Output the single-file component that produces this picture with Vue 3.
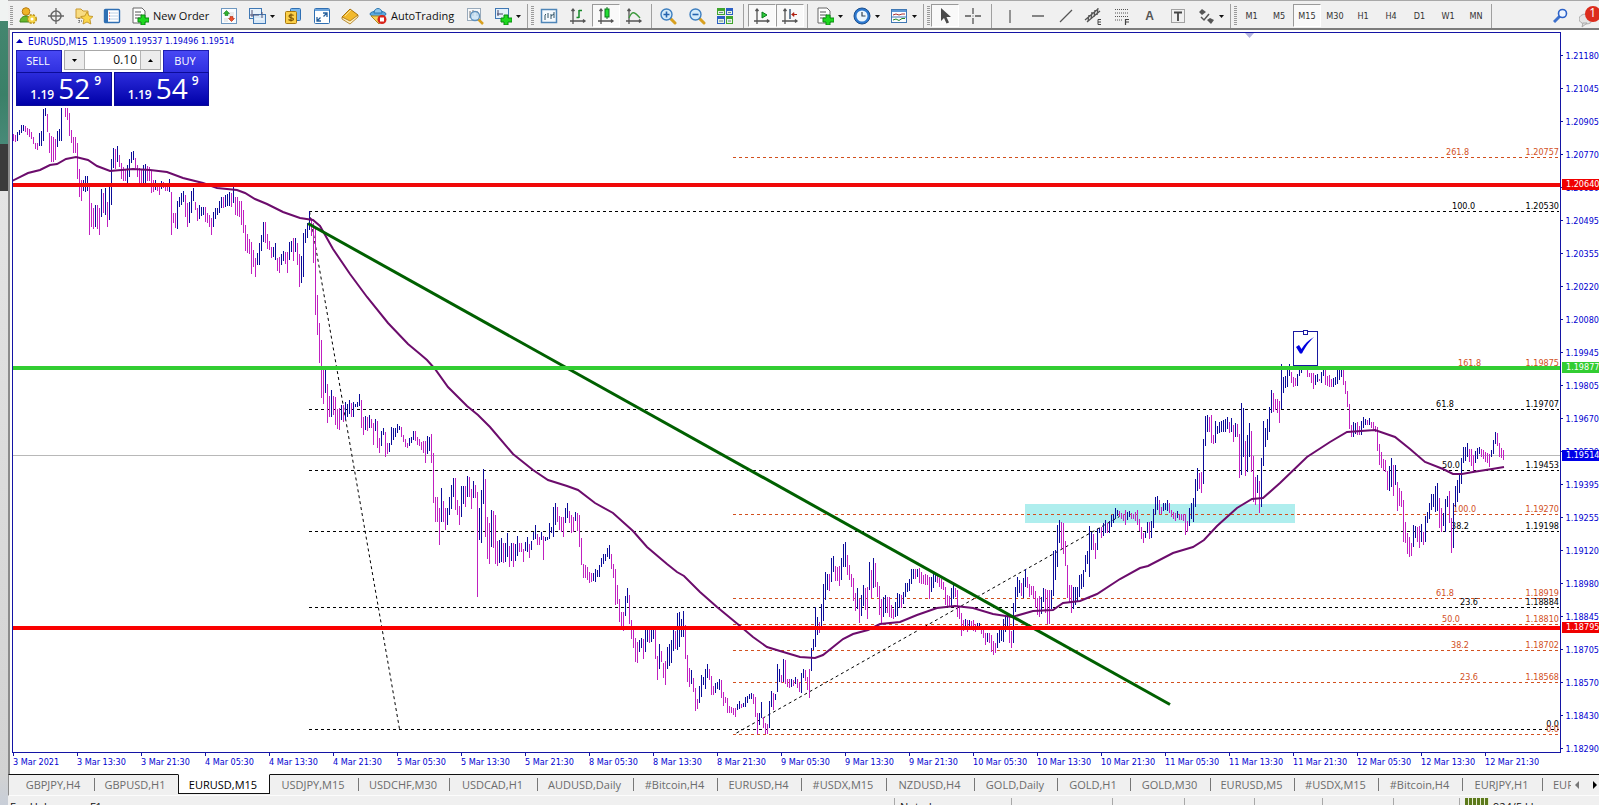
<script setup>
import { ref } from 'vue'

const lots = ref('0.10')

const caret = '<path d="M0 0h5L2.500 3z" fill="#111"/>'
const doc = '<path d="M2 1h9l3 3v12H2z" fill="#fff" stroke="#666"/><path d="M4 5h6M4 8h7M4 11h5" stroke="#555"/>'
const plus = '<path d="M10 8h4v3h4v4h-4v3h-4v-3H7v-4h3z" fill="#1fd81f" stroke="#0a8a12"/>'
const axes = '<path d="M4 2v15M1 14h15M2.500 4L4 2l1.500 2M14 12.500l2 1.500-2 1.500" fill="none" stroke="#555" stroke-width="1.300"/>'
const lens = '<path d="M11 11l5 5" stroke="#d8a020" stroke-width="3" stroke-linecap="round"/><circle cx="7.500" cy="7.500" r="5.500" fill="#d3ebfa" stroke="#3d7fc0" stroke-width="1.400"/>'

const icons = {
  user: '<circle cx="7" cy="4.500" r="3.800" fill="#f0b428" stroke="#b87a10"/><path d="M1 15c0-8 12-8 12 0z" fill="#67b82e" stroke="#3d8418"/><circle cx="13" cy="12" r="4" fill="#f6d548" stroke="#b8901c" stroke-dasharray="2 1.200" stroke-width="2"/><circle cx="13" cy="12" r="3.600" fill="#f6d548"/><circle cx="13" cy="12" r="1.500" fill="#fff"/>',
  target: '<circle cx="9" cy="9" r="5" fill="none" stroke="#666" stroke-width="1.500"/><path d="M9 1v16M1 9h16" stroke="#666" stroke-width="1.300"/>',
  folder: '<path d="M1 2h5l2 2h5v7H1z" fill="#f8dc82" stroke="#c99a30"/><path d="M4 11v6M4 14h4" stroke="#444" stroke-dasharray="1 1"/><path d="M12 5l2 4 4 .5-3 3 .8 4.500L12 15l-4 2 .8-4.500-3-3 4-.5z" fill="#fbd64a" stroke="#b98a1c" stroke-width=".8"/>',
  nav: '<rect x="1.500" y="2.500" width="15" height="13" rx="1" fill="#fff" stroke="#2f6fb3" stroke-width="1.400"/><path d="M2 3h3v12H2z" fill="#2f6fb3"/><path d="M7 6h8M7 9h8M7 12h8" stroke="#bcd2e8"/><path d="M6 6h1M6 9h1M6 12h1" stroke="#d33"/>',
  order: doc + plus,
  trades: '<rect x="1.500" y="1.500" width="15" height="15" fill="#fafcfe" stroke="#6f98c0"/><path d="M9 6h5M9 8h5M4 12h4M4 14h4" stroke="#d8d8d8"/><path d="M6.500 3.500l3 3H8v2H5v-2H3.500z" fill="#30b030" stroke="#178017" stroke-width=".6"/><path d="M11.500 14.500l-3-3H10v-2h3v2h1.500z" fill="#f0502c" stroke="#a82c10" stroke-width=".6"/>',
  windows: '<rect x="1.500" y="1.500" width="12" height="10" fill="#e9f2fb" stroke="#4078b4"/><rect x="5.500" y="7.500" width="12" height="9" fill="#d8e8f7" stroke="#4078b4"/><path d="M4 3v7M2 8h9M14 5v6" stroke="#557"/><path d="M7 12h9" stroke="#fff"/>',
  money: '<rect x="6.500" y="1.500" width="10" height="12" rx="1" fill="#7db8ec" stroke="#2f6fb3"/><rect x="1.500" y="4.500" width="11" height="12" rx="1" fill="#fbd04a" stroke="#a8780e"/><path d="M9.500 8.500C8.500 7.500 5 7.500 5 9.300s4.500 1 4.500 2.700-3.500 2-5 .5M7 6.500v8" fill="none" stroke="#7a5200" stroke-width="1.100"/>',
  full: '<rect x="1.500" y="1.500" width="15" height="15" rx="1" fill="#fff" stroke="#2f6fb3"/><path d="M2 2h14v2H2z" fill="#6ca4dc"/><path d="M4 10v4h4M4 14l3.500-3.500M10 6h4v4M14 6l-3.500 3.500" fill="none" stroke="#27609c" stroke-width="1.300"/>',
  book: '<path d="M1 10L9 2l8 6-8 8z" fill="#f2b92c" stroke="#a8720c"/><path d="M1 10l8 4 8-6v2l-8 7-8-5z" fill="#fff0c0" stroke="#a8720c" stroke-width=".8"/><path d="M4 9l6-6" stroke="#fbe08c"/>',
  auto: '<ellipse cx="9" cy="7" rx="8" ry="3" fill="#5ba8de" stroke="#2c76b0"/><path d="M5 6c0-6 8-6 8 0z" fill="#8fc8ee" stroke="#2c76b0"/><path d="M2 9h13l-5 8z" fill="#f8d25a" stroke="#b08820"/><circle cx="13" cy="12.500" r="4.500" fill="#d8241c"/><rect x="11" y="10.500" width="4" height="4" fill="#fff"/>',
  tester: '<rect x="1.500" y="1.500" width="13" height="12" fill="#f7f9fb" stroke="#9ab"/><path d="M4 4v7M7 3v6M11 4v5" stroke="#777"/><path d="M12 12l5 5" stroke="#d8a020" stroke-width="2.500"/><circle cx="9" cy="9" r="4.500" fill="#c7e2f6" fill-opacity=".8" stroke="#5d8fbc" stroke-width="1.300"/>',
  newchart: '<rect x="1.500" y="1.500" width="13" height="10" fill="#e4f0fb" stroke="#4078b4"/><path d="M4 3v6M3 7h6" stroke="#446"/>' + plus,
  bars: '<rect x="1.500" y="2.500" width="15" height="13" fill="#f4f9fd" stroke="#4f86b8" stroke-width="1.500"/><path d="M5 13V8M5 8l1-1M8 11V6M11 12V7M11 9l3-2M14 11V5" stroke="#356" fill="none"/>',
  ohlc: axes + '<path d="M10 3v8M10 3.500h3M7.500 10.500H10" stroke="#168a28" stroke-width="1.500"/>',
  candle: axes + '<path d="M10 0v12" stroke="#0b7a1c"/><rect x="8" y="2" width="4" height="8" fill="#22dd33" stroke="#0b7a1c"/>',
  line: axes + '<path d="M4 11c3-8 6-6 11 0" fill="none" stroke="#3d9a3d" stroke-width="1.300"/>',
  zoomin: lens + '<path d="M7.500 4.500v6M4.500 7.500h6" stroke="#2464b0" stroke-width="1.600"/>',
  zoomout: lens + '<path d="M4.500 7.500h6" stroke="#2464b0" stroke-width="1.600"/>',
  tile: '<path d="M1 1h8v7H1zM10 9h7v8h-7z" fill="#3fa52e"/><path d="M10 1h7v7h-7zM1 9h8v8H1z" fill="#2b5fc4"/><path d="M2 4h6v3H2zM11 4h5v3h-5zM2 12h6v4H2zM11 12h5v4h-5z" fill="#e6f2e2"/><path d="M3 5.500h4M12 5.500h3M3 14h4M12 14h3" stroke="#688"/>',
  scroll: axes + '<path d="M9 5v6l5-3z" fill="#2ccc3a" stroke="#0b7a1c"/>',
  shift: axes + '<path d="M9 2v10" stroke="#246" stroke-width="1.300"/><path d="M10.500 7.500l2.500-2v4z" fill="#b02010" stroke="#b02010" stroke-width=".6"/><path d="M13 7.500h3" stroke="#b02010"/>',
  indic: doc + plus,
  clock: '<circle cx="9" cy="9" r="8" fill="#2c78d0" stroke="#1c508e"/><circle cx="9" cy="9" r="5.500" fill="#eaf5fd"/><path d="M9 5v4h3.500" fill="none" stroke="#345" stroke-width="1.200"/>',
  tmpl: '<rect x="1.500" y="2.500" width="15" height="13" fill="#fbfdff" stroke="#4078b4"/><path d="M2 3h14v2H2z" fill="#5d99d8"/><path d="M2 10h14" stroke="#4078b4"/><path d="M3 8l3-1 3 1 3-1h3" fill="none" stroke="#a33"/><path d="M3 13l3-1 3 1.500 3-2h3" fill="none" stroke="#282"/>',
  cursor: '<path d="M5 1v13l3-3 2.500 5.500 2.500-1L10.500 10H15z" fill="#4a4a4a"/>',
  cross: '<path d="M9 1v6M9 11v6M1 9h6M11 9h6" stroke="#555" stroke-width="1.300"/><path d="M8.500 8.500h1v1h-1z" fill="#555"/>',
  vline: '<path d="M9 3v13" stroke="#555" stroke-width="1.200"/>',
  hline: '<path d="M3 9h12" stroke="#555" stroke-width="1.400"/>',
  diag: '<path d="M3 15L15 3" stroke="#555" stroke-width="1.300"/>',
  equi: '<path d="M1 13L14 2M3 15L16 4M5 8l-1 6M8 5l-1 7M11 3l-1 7M14 1l-1 7" stroke="#555" stroke-width="1.300"/><path d="M17 12.500h-3v5h3M14 15h3" fill="none" stroke="#444"/>',
  fibo: '<path d="M2 2.500h14M2 6h14M2 9.500h14M2 13h8" stroke="#555" stroke-dasharray="1 1"/><path d="M16 12.500h-3.500V18M12.500 15H16" fill="none" stroke="#444" stroke-width="1.200"/>',
  box: '<rect x="2.500" y="2.500" width="13" height="13" fill="none" stroke="#555" stroke-dasharray="1 1"/><path d="M5 5.500h8M9 5v9" stroke="#444" stroke-width="1.800"/>',
  shapes: '<path d="M2 5l3-3 4 3-4 3zM10 13l3-2 4 2-3 4z" fill="#555"/><path d="M4 10l3 3 5-6" fill="none" stroke="#555" stroke-width="1.500"/>',
}

const groups = [
  [
    { w: 28, i: 'user', t: 'New chart profile' }, { w: 28, i: 'target', t: 'Data window' }, { w: 28, i: 'folder', t: 'Navigator' }, { w: 28, i: 'nav', t: 'Terminal' },
    { w: 89, i: 'order', label: 'New Order' }, { w: 28, i: 'trades', t: 'Trades' }, { w: 36, i: 'windows', t: 'Profiles', caret: 1 }, { w: 28, i: 'money', t: 'Market watch' },
    { w: 29, i: 'full', t: 'Full screen' }, { w: 28, i: 'book', t: 'MetaEditor' }, { w: 97, i: 'auto', label: 'AutoTrading' }, { w: 28, i: 'tester', t: 'Strategy tester' },
    { w: 36, i: 'newchart', t: 'New chart', caret: 1 }, { sep: 4 },
  ],
  [
    { w: 28, i: 'bars', t: 'Charts' }, { w: 29, i: 'ohlc', t: 'Bar chart' }, { w: 28, i: 'candle', t: 'Candlesticks', on: 1 }, { w: 28, i: 'line', t: 'Line chart' }, { sep: 6 },
    { w: 28, i: 'zoomin', t: 'Zoom in' }, { w: 29, i: 'zoomout', t: 'Zoom out' }, { w: 28, i: 'tile', t: 'Tile windows' }, { sep: 9 },
    { w: 28, i: 'scroll', t: 'Auto scroll', on: 1 }, { w: 28, i: 'shift', t: 'Chart shift', on: 1 }, { sep: 7 },
    { w: 37, i: 'indic', t: 'Indicators', caret: 1 }, { w: 37, i: 'clock', t: 'Periods', caret: 1 }, { w: 37, i: 'tmpl', t: 'Templates', caret: 1 }, { sep: 3 },
  ],
  [
    { w: 28, i: 'cursor', t: 'Cursor', on: 1 }, { w: 28, i: 'cross', t: 'Crosshair' }, { sep: 8 }, { w: 29, i: 'vline', t: 'Vertical line' }, { w: 28, i: 'hline', t: 'Horizontal line' },
    { w: 27, i: 'diag', t: 'Trendline' }, { w: 28, i: 'equi', t: 'Channel' }, { w: 29, i: 'fibo', t: 'Fibonacci' }, { w: 27, tf: 'A', bold: 1 }, { w: 29, i: 'box', t: 'Text label' },
    { w: 36, i: 'shapes', t: 'Arrows', caret: 1 }, { sep: 4 },
  ],
  [
    { w: 27, tf: 'M1' }, { w: 28, tf: 'M5' }, { w: 28, tf: 'M15', on: 1 }, { w: 28, tf: 'M30' }, { w: 28, tf: 'H1' }, { w: 28, tf: 'H4' }, { w: 29, tf: 'D1' }, { w: 28, tf: 'W1' }, { w: 28, tf: 'MN' }, { sep: 3 },
  ],
]

// Price bars: high/low pairs in thirds of a pixel, one bar every two pixels.
const runs = [
  { x: 13, y: 100, d: '102 122 105 126 95 124 90 105 76 100 75 92 78 96 85 104 88 110 95 118 110 132 128 148 130 150 100 138 93 138 27 124 24 48 42 96 98 160 108 185 110 186 118 180 93 140 88 122 24 122 24 24 24 50 24 60 38 108 90 130 112 158 112 160 130 238 208 290 240 303 240 272 228 275 228 272 250 406 310 380 324 386 314 380 315 386 324 406 268 350 280 338 265 345 305 382 248 360 178 314 144 204 148 206 138 186 165 200 190 238 202 242 208 242 195 248 178 230 156 190 154 180 175 205 195 232 205 248 210 250 194 248 193 250 197 242 200 244 212 278 240 275 240 270 250 272 262 284 243 268 246 265 250 272 250 274 238 276 275 404 338 368 340 384 303 386 290 320 280 315 273 305 284 352 310 382 306 370 272 340 264 302 305 330 325 362 315 358 322 348 322 345 322 365 338 370 345 382 354 404 337 380 325 358 324 345 303 340 290 325 292 325 284 322 283 318 275 318 278 322 262 310 290 345 292 348 302 350 303 375 330 400 376 452 402 458 418 462 425 523 450 500 474 530 460 495 430 494 405 452 366 425 366 428 402 446 422 450 440 474 440 472 430 480 475 512 470 520 462 494 453 482 455 492 455 518 425 480 422 455 414 482 415 455 428 495 462 560 468 550 400 530 388 430 370 415 334 390 355 408 370 490 380 645 585 706 670 790 720 895 808 912 806 878 853 968 888 950 870 950 888 945 890 975 928 988 925 990 916 960 916 966 906 960 912 950 900 942 908 952 905 952 912 920 906 922 882 918' },
  { x: 361, y: 360, d: '120 205 170 225 168 210 172 214 165 205 178 205 190 255 178 212 182 265 235 278 214 258 205 225 215 290 250 282 248 276 200 255 203 240 204 230 192 218 198 210 202 230 225 245 238 262 248 264 234 258 232 248 212 240 212 244 230 255 238 258 245 270 244 280 244 308 228 282 230 272 222 308 278 430 410 486 412 486 443 556 385 486 424 486 443 510 443 496 412 464 375 446 354 410 355 450 420 465 438 496 378 470 378 432 378 440 348 410 350 412 386 446 362 415 375 415 396 710 445 540 390 550 328 432 358 530 472 598 488 612 450 560 454 565 465 612 542 618 540 610 534 606 550 610 548 606 518 590 558 622 548 602 548 622 552 602 528 588 550 576 548 576 568 606 545 572 532 575 552 595 542 570 515 540 495 538 522 555 530 555 516 540 528 600 530 542 532 540 490 538 500 518 442 530 430 496 440 486 468 510 472 516 470 530 445 490 428 474 452 490 466 518 472 515 456 484 458 512 465 562 533 615 612 654 615 655 622 660 635 670 640 665 640 664 628 665 630 652 615 650 594 622 582 612 582 602 565 592 556 596 582 626 612 655 628 736 675 732 718 786 755 800 755 812 708 768 685 728 705 792 780 838 808 865 835 905 846 910 840 876 834 865 836 898 808 875 808 846 810 850 810 845 806 838 810 898 888 960 852 928 872 905 910 955 902 974 860 926 852 918 840 908 808 872 812 866 758 870 755 860 778 830 752 830 795 896 884 965 925 982 930 972 955 995 985 1052 1018 1048 978 1028' },
  { x: 701, y: 480, d: '585 650 590 615 568 628 552 595 568 600 588 645 618 645 608 640 605 628 598 630 600 655 636 678 650 670 655 698 678 698 680 698 685 705 685 710 672 690 664 688 672 685 668 682 650 680 648 670 642 658 640 658 643 672 650 710 700 763 698 735 665 715 710 745 730 763 732 762 662 745 632 680 638 690 642 660 552 635 568 605 585 610 538 606 540 612 596 622 598 624 596 620 600 618 592 612 598 625 608 635 578 638 568 595 570 602 590 630 568 653 505 574 478 510 382 502 410 465 425 460 372 438 312 422 276 360 282 330 282 332 234 306 228 275 258 302 260 302 258 318 234 300 192 262 186 260 225 285 255 300 282 322 295 362 338 392 325 388 358 428 345 408 315 378 325 390 322 418 246 330 270 355 234 325 250 322 306 350 318 405 358 432 350 410 346 398 352 400 352 412 374 415 388 418 365 412 340 408 342 385 345 385 335 372 310 350 310 336 298 332 268 312 266 298 268 298 266 292 264 310 275 312 285 312 282 315 286 316 290 358 292 335 282 325 285 305 285 308 295 320 298 326 305 330 322 376 345 378 348 382 325 382 312 356 325 350 330 412 380 418 400 468 420 452 418 442 420 455 420 448 422 450 420 452 432 455 430 448 428 445 440 462 448 475 458 495 460 485 458 490 465 515 482 524 488 520 460 505 448 490 444 482 418 485 412 455 405 438 408 488 452 503 370 488 320 395 290 350 300 340 308 348 295 355 268 320 292 325 312 350 318 346 318 358 332 385 355 405 348 412 350 402 325 365 328 400 330 432 330 432 330 388 213 348 210 300 135 262 120 190 125 208 130 222 182 258 255 355' },
  { x: 1069, y: 320, d: '795 850 795 880 800 866 802 855 800 845 765 830 762 808 750 800 705 755 692 732 618 770 635 690 642 690 668 716 628 690 625 640 622 655 610 648 600 640 608 640 602 638 584 622 582 608 564 598 570 588 572 592 578 598 582 602 570 614 575 600 574 592 578 596 582 598 575 602 570 615 598 632 620 658 640 668 635 655 605 640 606 656 604 655 568 625 530 585 528 570 540 582 562 582 548 572 550 570 540 572 550 580 570 592 575 598 578 602 572 595 582 600 582 600 582 602 582 645 604 635 564 618 550 598 535 605 478 560 445 512 458 508 456 518 358 492 288 378 285 335 290 335 285 368 345 372 303 368 318 342 305 338 304 336 300 335 296 336 292 326 305 340 294 336 315 366 310 352 312 352 342 474 250 465 265 410 362 468 345 455 310 412 333 455 408 545 472 555 465 520 484 578 415 560 303 438 325 380 298 360 262 335 210 278 218 275 238 270 236 280 244 310 132 268 172 220 168 205 148 200 132 168 155 190 172 200 175 198 162 198 148 168 132 158' },
  { x: 1303, y: 320, d: '132 148 132 150 148 170 158 172 158 190 160 206 166 196 162 185 176 184 155 190 148 168 150 195 168 198 165 200 178 200 175 202 172 195 150 192 148 180 148 170 148 195 182 222 212 262 252 328 315 350 305 350 308 342 305 346 318 346 303 345 292 325 298 316 300 314 295 315 305 325 305 328 318 336 322 392 372 435 395 445 418 452 420 455 452 510 438 514 415 500 435 528 435 495 486 574 505 558 512 560 540 665 605 668 638 702 652 710 668 708 615 682 618 655 620 665 618 684 612 665 635 675 588 665 575 610 550 598 522 570 522 560 498 575 488 572 535 625 565 635 580 618 536 635 528 560 512 608 595 698 550 684 498 560 480 545 460 518 415 492 380 428 380 422 370 410 388 425 388 438 405 460 392 430 384 418 380 402 388 412 390 418 396 425 400 430 402 440 390 412 360 402 336 372 340 378 368 412 385 415 390 420' },
]

let upPath = ''
let downPath = ''
let prevMid = 0
for (const run of runs) {
  const v = run.d.split(' ').map(Number)
  for (let k = 0; k < v.length; k += 2) {
    const hi = run.y + Math.round(v[k] / 3)
    const lo = run.y + Math.round(v[k + 1] / 3)
    const mid = (hi + lo) / 2
    const seg = `M${run.x + k}.5 ${hi}V${lo}`
    if (mid < prevMid) upPath += seg
    else downPath += seg
    prevMid = mid
  }
}

const average = '12,181 28,173 40,170 50,165 57,164 66,159 76,157 88,160 97,166 110,171 133,169 150,170 167,172 183,178 203,183 217,188 237,190 245,193 255,199 267,204 283,212 300,218 313,220 320,226 333,249 350,274 367,297 388,323 408,344 420,354 427,360 435,369 448,387 467,406 478,415 490,427 513,454 533,470 548,480 567,486 578,490 595,503 613,513 633,531 647,547 667,564 677,572 684,576 700,592 717,607 740,626 753,637 767,647 780,651 800,657 815,658 823,655 843,639 853,634 868,630 880,624 900,622 917,615 937,608 955,606 973,608 993,614 1012,617 1033,611 1053,610 1063,603 1080,601 1097,594 1120,579 1140,568 1148,566 1173,553 1193,547 1204,540 1217,526 1237,508 1252,499 1263,498 1280,483 1307,457 1330,442 1347,432 1375,430 1395,437 1410,449 1425,462 1443,469 1453,474 1462,474 1473,472 1492,469 1504,467'

const black = '#000000'
const orange = '#d2501e'
const fibs = [
  { y: 211, c: black, x: 1452, r: '100.0', p: '1.20530' },
  { y: 409, c: black, x: 1436, r: '61.8', p: '1.19707' },
  { y: 470, c: black, x: 1442, r: '50.0', p: '1.19453' },
  { y: 531, c: black, x: 1451, r: '38.2', p: '1.19198' },
  { y: 607, c: black, x: 1460, r: '23.6', p: '1.18884' },
  { y: 729, c: black, x: 1546, r: '', p: '0.0' },
  { y: 157, c: orange, x: 1446, r: '261.8', p: '1.20757' },
  { y: 368, c: orange, x: 1458, r: '161.8', p: '1.19875' },
  { y: 514, c: orange, x: 1453, r: '100.0', p: '1.19270' },
  { y: 598, c: orange, x: 1436, r: '61.8', p: '1.18919' },
  { y: 624, c: orange, x: 1442, r: '50.0', p: '1.18810' },
  { y: 650, c: orange, x: 1451, r: '38.2', p: '1.18702' },
  { y: 682, c: orange, x: 1460, r: '23.6', p: '1.18568' },
  { y: 734, c: orange, x: 1546, r: '', p: '0.0' },
]
const fibStart = (f) => (f.c === black ? 309 : 733)

const prices = ['1.21180', '1.21045', '1.20905', '1.20770', '1.20630', '1.20495', '1.20355', '1.20220', '1.20080', '1.19945', '1.19805', '1.19670', '1.19530', '1.19395', '1.19255', '1.19120', '1.18980', '1.18845', '1.18705', '1.18570', '1.18430', '1.18290']
const times = ['3 Mar 2021', '3 Mar 13:30', '3 Mar 21:30', '4 Mar 05:30', '4 Mar 13:30', '4 Mar 21:30', '5 Mar 05:30', '5 Mar 13:30', '5 Mar 21:30', '8 Mar 05:30', '8 Mar 13:30', '8 Mar 21:30', '9 Mar 05:30', '9 Mar 13:30', '9 Mar 21:30', '10 Mar 05:30', '10 Mar 13:30', '10 Mar 21:30', '11 Mar 05:30', '11 Mar 13:30', '11 Mar 21:30', '12 Mar 05:30', '12 Mar 13:30', '12 Mar 21:30']

const tabs = [
  ['GBPJPY,H4', 81], ['GBPUSD,H1', 83], ['EURUSD,M15', 92], ['USDJPY,M15', 89], ['USDCHF,M30', 91], ['USDCAD,H1', 88], ['AUDUSD,Daily', 96], ['#Bitcoin,H4', 84], ['EURUSD,H4', 84], ['#USDX,M15', 85], ['NZDUSD,H4', 88], ['GOLD,Daily', 83], ['GOLD,H1', 73], ['GOLD,M30', 80], ['EURUSD,M5', 84], ['#USDX,M15', 84], ['#Bitcoin,H4', 84], ['EURJPY,H1', 80], ['EUR', 28],
]
const statusCells = [117, 101, 72, 70, 68, 71, 66]
</script>

<template>
  <div class="desktop">
    <div class="backdrop"><i class="b1"></i><i class="b2"></i><i class="b3"></i><i class="b4"></i></div>
    <main class="terminal">
      <header class="toolbar">
        <div v-for="(g, gi) in groups" :key="gi" class="group">
          <span class="grip"></span>
          <template v-for="(b, bi) in g" :key="bi">
            <span v-if="b.sep" class="sep" :style="{ width: b.sep + 'px' }"></span>
            <button v-else type="button" class="tool" :class="{ on: b.on, wide: b.label || b.caret, tf: b.tf, bold: b.bold }" :style="{ width: b.w + 'px' }" :aria-label="b.t">
              <svg v-if="b.i" width="18" height="18" viewBox="0 0 18 18" v-html="icons[b.i]"></svg>
              <span v-if="b.label" class="label">{{ b.label }}</span>
              <span v-if="b.tf">{{ b.tf }}</span>
              <svg v-if="b.caret" class="caret" width="5" height="3" v-html="caret"></svg>
            </button>
          </template>
        </div>
        <div class="right">
          <button type="button" class="tool find" aria-label="Search">
            <svg width="16" height="16" viewBox="0 0 16 16"><path d="M1 14l6-6" stroke="#3d70cc" stroke-width="3" /><circle cx="9.500" cy="5.500" r="4" fill="#eef5ff" stroke="#2c62c8" stroke-width="1.600" /></svg>
          </button>
          <button type="button" class="tool alert" aria-label="Notifications">
            <svg width="20" height="24" viewBox="0 0 20 24"><ellipse cx="7" cy="15" rx="7" ry="5" fill="#e4e4e4" stroke="#aaa" /><path d="M4 19l-1 4 5-4z" fill="#e4e4e4" stroke="#aaa" /><circle cx="14" cy="10" r="8" fill="#dc2c1c" /></svg>
            <b>1</b>
          </button>
        </div>
      </header>

      <section class="chart">
        <div class="plot">
          <svg class="canvas">
            <g transform="translate(-13 -33)">
              <rect x="1025" y="504" width="270" height="19" fill="#afeeee" />
              <path d="M13 455.500H3000" stroke="#b8b8b8" />
              <g stroke-dasharray="3 3">
                <path v-for="f in fibs" :key="f.c + f.y" :d="`M${fibStart(f)} ${f.y}.5H1559`" :stroke="f.c" />
              </g>
              <g class="fib">
                <template v-for="f in fibs" :key="f.c + f.y">
                  <text :x="f.x" :y="f.y - 2" :fill="f.c">{{ f.r }}</text>
                  <text x="1559" :y="f.y - 2" :fill="f.c" text-anchor="end">{{ f.p }}</text>
                </template>
              </g>
              <path d="M309.500 211.500L399.500 729M736.500 733L1119.500 516.500" stroke="#000" stroke-dasharray="3 3" fill="none" />
              <g fill="none">
                <path :d="downPath" stroke="#c020c0" />
                <path :d="upPath" stroke="#0c0c98" />
              </g>
              <polyline :points="average" fill="none" stroke="#6c0c6c" stroke-width="2" />
              <path d="M308 223.500L1170 704.500" stroke="#006000" stroke-width="3" />
              <path d="M12 185H3000" stroke="#f00808" stroke-width="4" />
              <path d="M12 368H3000" stroke="#32cd32" stroke-width="4" />
              <path d="M12 628H3000" stroke="#fa0000" stroke-width="4" />
              <g fill="#fff" stroke="#1818a0">
                <rect x="1293.500" y="331.500" width="24" height="34" />
                <rect x="1303.500" y="330.500" width="4" height="4" />
              </g>
              <path d="M1296 347l3-2 2.500 4c3-5 7-9 12.500-12-5 5-8 9-12 16.500h-2z" fill="#0000e0" />
              <path d="M1245 33h9l-4.500 5z" fill="#b4b4e0" />
            </g>
          </svg>
          <div class="caption">
            <svg width="7" height="4"><path d="M0 4L3.500 0 7 4z" fill="#0000b4" /></svg>
            <span class="sym">EURUSD,M15</span>
            <span>1.19509 1.19537 1.19496 1.19514</span>
          </div>
          <div class="ticket">
            <div class="head">
              <button type="button" class="side">SELL</button>
              <div class="spin">
                <button type="button" aria-label="Decrease volume"><svg width="5" height="3"><path d="M0 0h5L2.500 3z" /></svg></button>
                <input v-model="lots" type="text" aria-label="Volume" />
                <button type="button" aria-label="Increase volume"><svg width="5" height="3"><path d="M0 3h5L2.500 0z" /></svg></button>
              </div>
              <button type="button" class="side">BUY</button>
            </div>
            <div class="quotes">
              <button type="button" class="quote"><span>1.19</span><strong>52</strong><sup>9</sup></button>
              <button type="button" class="quote"><span>1.19</span><strong>54</strong><sup>9</sup></button>
            </div>
          </div>
        </div>
        <div class="prices">
          <span v-for="p in prices" :key="p">{{ p }}</span>
          <b class="tag t1">1.20640</b>
          <b class="tag t2">1.19877</b>
          <b class="tag t3">1.19514</b>
          <b class="tag t4">1.18795</b>
        </div>
        <div class="times"><span v-for="t in times" :key="t">{{ t }}</span></div>
      </section>

      <nav class="tabs" aria-label="Charts">
        <button v-for="(t, i) in tabs" :key="i" type="button" :class="{ active: i === 2, bare: i === 1 || i === 18 }" :style="{ width: t[1] + 'px' }">{{ t[0] }}</button>
        <span class="arrows">
          <svg width="4" height="8"><path d="M4 0v8L0 4z" fill="#777" /></svg>
          <svg width="4" height="8"><path d="M0 0v8l4-4z" fill="#000" /></svg>
        </span>
      </nav>

      <footer class="status">
        <span class="help">For Help, press F1</span>
        <span v-for="(w, i) in statusCells" :key="i" class="cell" :style="{ width: w + 'px' }">{{ i === 0 ? 'Noted' : '' }}</span>
        <span class="traffic"><i></i>924/5 kb</span>
      </footer>
    </main>
  </div>
</template>

<style>
body {
  margin: 0;
  overflow: hidden;
}
</style>

<style scoped>
.desktop {
  display: flex;
  height: 100vh;
  overflow: hidden;
  background: #f0f0f0;
  font-family: "Open Sans", "Noto Sans", sans-serif;
  font-size: 11px;
  color: #111;
}
button, input {
  font: inherit;
  color: inherit;
  margin: 0;
  padding: 0;
  border: 0;
  background: none;
  box-sizing: border-box;
}
.backdrop { display: flex; flex-direction: column; flex: 0 0 8px; }
.b1 { height: 21px; background: #f0f3f2; }
.b2 { height: 123px; background: linear-gradient(#44866f, #3a8068 60%, #488a78); }
.b3 { height: 47px; background: #3b3b3b; }
.b4 { flex: 1; background: linear-gradient(#e4e4e4, #d2d2d2 95%, #c8ced8); }
.terminal { flex: 1; min-width: 0; display: flex; flex-direction: column; }

.toolbar {
  display: flex;
  flex: none;
  height: 28px;
  box-sizing: border-box;
  padding-top: 3px;
  border-top: 1px solid #a8a8a8;
  background: #f0f0f0;
}
.group { display: flex; flex: none; }
.grip {
  width: 3px;
  height: 20px;
  margin: 2px 1px 0 2px;
  background: repeating-linear-gradient(#9a9a9a 0 1px, #f0f0f0 1px 2px);
}
.group:last-of-type .grip { margin-left: 3px; }
.sep { position: relative; display: flex; justify-content: center; }
.sep::before { content: ""; width: 1px; height: 24px; background: #a0a0a0; }
.tool {
  display: flex;
  align-items: center;
  justify-content: center;
  height: 24px;
  flex: none;
}
.tool.wide { justify-content: flex-start; padding-left: 5px; }
.tool.on {
  background: #f9f9f9;
  border: 1px solid;
  border-color: #9a9a9a #fff #fff #9a9a9a;
  height: 23px;
}
.label { margin-left: 4px; padding-bottom: 2px; white-space: nowrap; }
.caret { margin-left: 4px; }
.tf { font: 9px "DejaVu Sans Condensed", "DejaVu Sans", sans-serif; color: #333; }
.tf.bold { font: bold 12px "Liberation Sans", sans-serif; color: #555; }
.right { margin-left: auto; display: flex; overflow: hidden; }
.find { width: 24px; }
.alert { position: relative; width: 26px; justify-content: flex-end; }
.alert b { position: absolute; right: 3px; top: 0; color: #fff; font-size: 12px; font-weight: 400; }

.chart {
  display: grid;
  grid-template-columns: minmax(0, 1fr) 38px;
  grid-template-rows: 721px 21px;
  flex: none;
  box-sizing: border-box;
  padding: 2px 0 0 2px;
  border-top: 2px solid #7c7c7c;
  border-left: 2px solid #8c8c8c;
  background: #fff;
  font-family: "DejaVu Sans Condensed", "DejaVu Sans", sans-serif;
  font-size: 9px;
  color: #0000d0;
}
.plot { position: relative; border: 1px solid #1414a4; overflow: hidden; }
.canvas { display: block; width: 100%; height: 100%; }
.fib text { font-size: 9px; }
.caption {
  position: absolute;
  left: 3px;
  top: 2px;
  display: flex;
  align-items: center;
  gap: 5px;
  height: 12px;
  white-space: nowrap;
}
.sym { font-size: 10px; }
.ticket {
  position: absolute;
  left: 3px;
  top: 17px;
  width: 193px;
  font-family: "Open Sans", sans-serif;
  color: #fff;
}
.head { display: flex; justify-content: space-between; height: 22px; }
.side {
  width: 46px;
  border: 1px solid #1c1cb0;
  border-bottom: 0;
  background: linear-gradient(#4848f4, #3030e0);
  font-size: 11px;
  line-height: 18px;
  padding: 0 2px 2px 0;
}
.spin {
  display: flex;
  width: 97px;
  height: 20px;
  box-sizing: border-box;
  border: 1px solid #a8a8a8;
  background: #fff;
  color: #111;
}
.spin button { width: 19px; flex: none; display: flex; align-items: center; justify-content: center; background: #ececec; }
.spin input { width: 0; flex: 1; text-align: right; padding: 0 3px 2px; border: solid #b4b4b4; border-width: 0 1px; font-size: 12px; }
.quotes { display: flex; gap: 2px; }
.quote {
  flex: 1;
  display: flex;
  align-items: flex-end;
  justify-content: center;
  height: 34px;
  border: 1px solid #0c0c98;
  background: linear-gradient(#2c2cdc, #0000a8);
  padding: 0 4px 3px 8px;
}
.quote span { font-size: 12px; font-weight: 600; line-height: 15px; }
.quote strong { font-size: 28px; font-weight: 400; line-height: 28px; margin: 0 4px; }
.quote sup { align-self: flex-start; font-size: 12px; font-weight: 600; line-height: 15px; }

.prices { position: relative; display: flex; flex-direction: column; padding-top: 7px; overflow: hidden; }
.prices span { display: flex; align-items: center; height: 33px; flex: none; }
.prices span::before { content: ""; width: 2px; height: 1px; background: #1414a4; margin-right: 3px; }
.tag {
  position: absolute;
  left: 1px;
  right: 0;
  height: 11px;
  padding-left: 4px;
  font-weight: 400;
  line-height: 11px;
  color: #fff;
}
.t1 { top: 147px; background: #f00000; }
.t2 { top: 330px; background: #32cd32; }
.t3 { top: 418px; background: #0000e8; }
.t4 { top: 590px; background: #f00000; }
.times { grid-column: 1 / 3; display: flex; padding-left: 1px; overflow: hidden; }
.times span { position: relative; flex: 0 0 64px; line-height: 19px; white-space: nowrap; }
.times span::before { content: ""; position: absolute; left: 0; top: 0; width: 1px; height: 3px; background: #1414a4; }

.tabs {
  position: relative;
  display: flex;
  flex: none;
  height: 20px;
  padding-left: 5px;
  border-top: 1px solid #111;
  border-left: 1px solid #8c8c8c;
  border-bottom: 1px solid #fcfcfc;
  background: #f0f0f0;
  font-family: "Open Sans", sans-serif;
  color: #6c6c6c;
}
.tabs button {
  position: relative;
  flex: none;
  height: 19px;
  padding-right: 3px;
  overflow: hidden;
  white-space: nowrap;
  text-align: center;
}
.tabs button::after { content: ""; position: absolute; right: 0; top: 3px; height: 13px; width: 1px; background: #777; }
.tabs .bare::after, .tabs .active::after { display: none; }
.tabs button:nth-of-type(19) { text-align: left; padding: 0 0 0 10px; }
.tabs .active { margin-top: -1px; height: 20px; padding-right: 2px; border: 1px solid #111; border-top-color: #fff; background: #fff; color: #000; }
.arrows { margin-left: auto; display: flex; align-items: center; gap: 14px; padding-right: 2px; }

.status { display: flex; flex: none; height: 22px; padding-left: 2px; }
.help { flex: 1; white-space: nowrap; line-height: 18px; padding-top: 2px; }
.cell { position: relative; box-sizing: border-box; padding: 2px 0 0 6px; line-height: 18px; }
.cell::before, .traffic::before { content: ""; position: absolute; left: 0; top: 2px; height: 18px; width: 1px; background: #a8a8a8; }
.traffic { position: relative; display: flex; gap: 4px; width: 134px; padding: 2px 0 0 6px; line-height: 18px; }
.traffic i { width: 24px; height: 14px; background: repeating-linear-gradient(90deg, #5c7a1c 0 3px, #e8ecd0 3px 4px); }
</style>
